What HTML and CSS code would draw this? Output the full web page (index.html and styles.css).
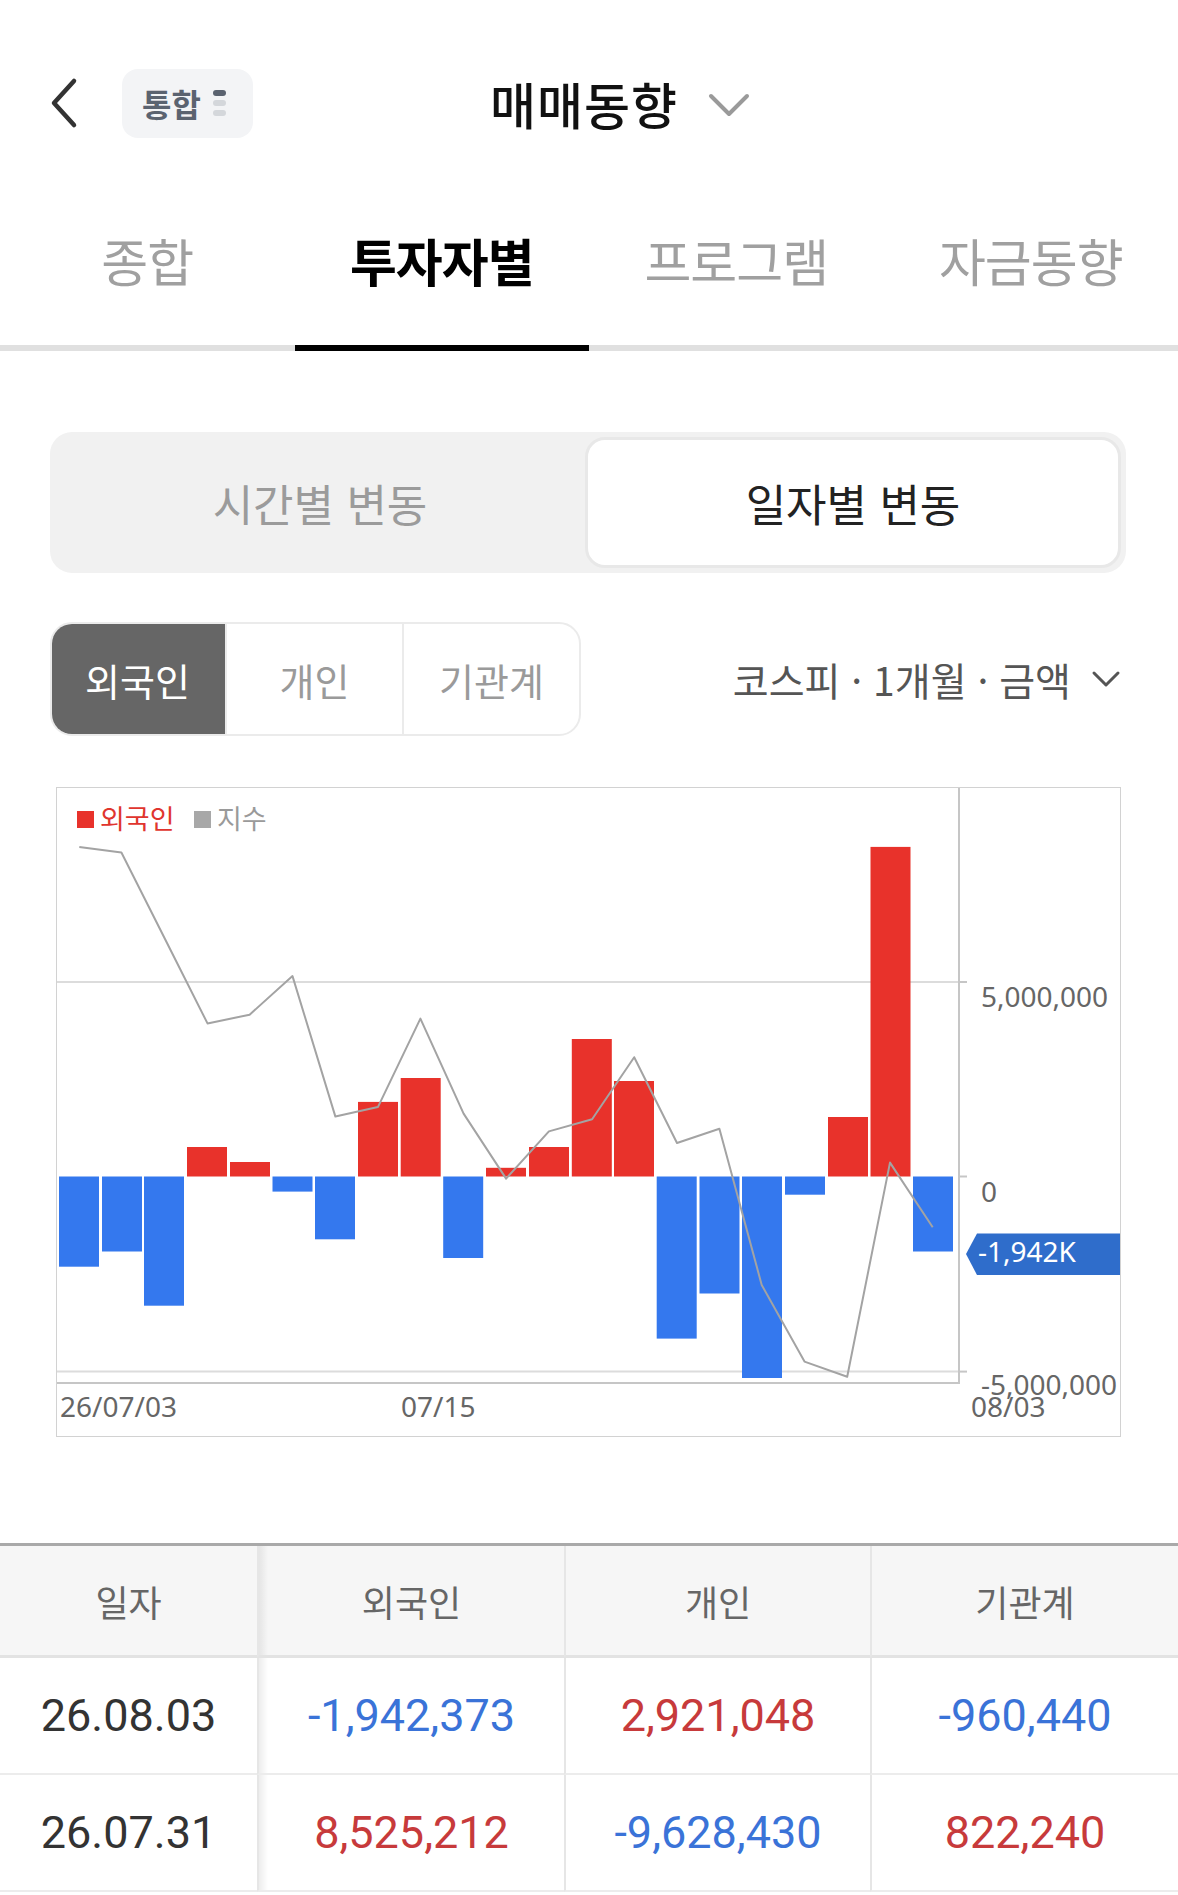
FILE: index.html
```html
<!DOCTYPE html>
<html lang="ko">
<head>
<meta charset="utf-8">
<title>매매동향</title>
<link rel="stylesheet" href="styles.css">
</head>
<body>
<header class="topbar">
  <div class="topbar-left">
    <svg class="back" viewBox="0 0 30 52" width="30" height="52"><polyline points="25,4 5,26 25,48" fill="none" stroke="#333" stroke-width="4.5" stroke-linecap="round" stroke-linejoin="round"/></svg>
    <div class="badge"><span class="badge-text">통합</span><span class="dots"><span></span><span></span><span></span></span></div>
  </div>
  <h1 class="title">매매동향</h1>
  <div class="topbar-right">
    <svg class="title-chev" viewBox="0 0 42 24" width="42" height="24"><polyline points="3,3 21,21 39,3" fill="none" stroke="#9a9a9a" stroke-width="4" stroke-linecap="round" stroke-linejoin="round"/></svg>
  </div>
</header>

<nav class="tabs">
  <div class="tab">종합</div>
  <div class="tab active">투자자별</div>
  <div class="tab">프로그램</div>
  <div class="tab">자금동향</div>
</nav>

<div class="segment">
  <div class="seg">시간별 변동</div>
  <div class="seg active">일자별 변동</div>
</div>

<div class="filters">
  <div class="group">
    <div class="fbtn active">외국인</div>
    <div class="fbtn">개인</div>
    <div class="fbtn">기관계</div>
  </div>
  <div class="dropdown">
    <span>코스피 · 1개월 · 금액</span>
    <svg class="dd-chev" viewBox="0 0 30 18" width="30" height="18"><polyline points="3,3 15,15 27,3" fill="none" stroke="#555" stroke-width="3" stroke-linecap="round" stroke-linejoin="round"/></svg>
  </div>
</div>

<svg class="chart" viewBox="56 786 1065 650" width="1065" height="650">
  <rect x="56.5" y="786.5" width="1064" height="649" fill="#fff" stroke="#d2d2d2" stroke-width="1"/>
  <g stroke="#dcdcdc" stroke-width="2">
    <line x1="57" y1="981" x2="959" y2="981"/>
    <line x1="57" y1="1370.6" x2="959" y2="1370.6"/>
  </g>
  <g fill="#3478ee">
    <rect x="59" y="1175.5" width="40" height="90.2"/>
    <rect x="102" y="1175.5" width="40" height="75"/>
    <rect x="144" y="1175.5" width="40" height="129.2"/>
    <rect x="272.5" y="1175.5" width="40" height="15.1"/>
    <rect x="315" y="1175.5" width="40" height="62.8"/>
    <rect x="443.2" y="1175.5" width="40" height="81.5"/>
    <rect x="656.7" y="1175.5" width="40" height="162.1"/>
    <rect x="699.5" y="1175.5" width="40" height="117"/>
    <rect x="742" y="1175.5" width="40" height="201.5"/>
    <rect x="785" y="1175.5" width="40" height="18.2"/>
    <rect x="913" y="1175.5" width="40" height="75"/>
  </g>
  <g fill="#e8322b">
    <rect x="187" y="1146" width="40" height="29.5"/>
    <rect x="230" y="1161" width="40" height="14.5"/>
    <rect x="358" y="1100.9" width="40" height="74.6"/>
    <rect x="400.7" y="1077" width="40" height="98.5"/>
    <rect x="486" y="1166.8" width="40" height="8.7"/>
    <rect x="529" y="1146" width="40" height="29.5"/>
    <rect x="571.8" y="1038" width="40" height="137.5"/>
    <rect x="614" y="1080" width="40" height="95.5"/>
    <rect x="828" y="1116" width="40" height="59.5"/>
    <rect x="870.5" y="845.9" width="40" height="329.6"/>
  </g>
  <g stroke="#c6c6c6" stroke-width="2">
    <line x1="959" y1="981" x2="967" y2="981"/>
    <line x1="959" y1="1175.5" x2="967" y2="1175.5"/>
    <line x1="959" y1="1370.6" x2="967" y2="1370.6"/>
    <line x1="959" y1="787" x2="959" y2="1383"/>
    <line x1="57" y1="1382" x2="959" y2="1382"/>
  </g>
  <polyline fill="none" stroke="#a3a3a3" stroke-width="2" stroke-linejoin="round" points="79.3,845.9 121.4,851.5 164.5,937 207.5,1022.4 249.6,1013.7 292.5,975.1 335.4,1115.6 377.9,1106.1 420.4,1017.6 463.6,1112.6 506.1,1177.6 548.9,1130.4 592.1,1118.2 634.2,1056.2 677,1142 719.4,1127.8 761.7,1283.9 804.5,1360.6 847.2,1375.8 890,1161.6 932.7,1226.2"/>
  <rect x="77" y="810" width="17" height="17" fill="#e8322b"/>
  <text class="lg" x="100" y="828" fill="#e0352e">외국인</text>
  <rect x="194" y="810" width="17" height="17" fill="#a8a8a8"/>
  <text class="lg" x="217" y="828" fill="#9a9a9a">지수</text>
  <g class="ax" fill="#666">
    <text x="981" y="1006">5,000,000</text>
    <text x="981" y="1200.5">0</text>
    <text x="981" y="1394">-5,000,000</text>
    <text x="971" y="1416">08/03</text>
    <text x="60" y="1416">26/07/03</text>
    <text x="401" y="1416">07/15</text>
  </g>
  <polygon points="966,1253 977,1232.5 1120,1232.5 1120,1274 977,1274" fill="#2f6dcb"/>
  <text class="ax" x="978" y="1261" fill="#fff">-1,942K</text>
</svg>

<div class="table">
  <div class="th">일자</div>
  <div class="th c2">외국인</div>
  <div class="th">개인</div>
  <div class="th">기관계</div>

  <div class="td date">26.08.03</div>
  <div class="td c2 blue">-1,942,373</div>
  <div class="td red">2,921,048</div>
  <div class="td blue">-960,440</div>

  <div class="td date">26.07.31</div>
  <div class="td c2 red">8,525,212</div>
  <div class="td blue">-9,628,430</div>
  <div class="td red">822,240</div>
</div>
</body>
</html>
```
FILE: styles.css
```css
* { box-sizing: border-box; margin: 0; padding: 0; }

body {
  width: 1178px;
  background: #fff;
  font-family: "Noto Sans CJK KR", "Noto Sans", sans-serif;
  color: #111;
}

.topbar {
  height: 206px;
  display: grid;
  grid-template-columns: 1fr auto 1fr;
  align-items: center;
}

.topbar-left {
  display: flex;
  align-items: center;
  padding-left: 49px;
}

.back { display: block; }

.badge {
  margin-left: 43px;
  width: 131px;
  height: 69px;
  border-radius: 16px;
  background: #f3f4f6;
  display: flex;
  align-items: center;
  padding-left: 20px;
  gap: 12px;
}

.badge-text {
  font-size: 32px;
  font-weight: 700;
  color: #5b6370;
  line-height: 1;
}

.dots {
  display: flex;
  flex-direction: column;
  gap: 4px;
}

.dots span {
  width: 13px;
  height: 6px;
  border-radius: 3px;
  background: #d4d7db;
}

.dots span:first-child { background: #5b6370; }

.title {
  font-size: 50px;
  font-weight: 500;
  letter-spacing: 1px;
  color: #111;
  line-height: 1;
  margin-right: 10px;
}

.topbar-right {
  display: flex;
  align-items: center;
  padding-left: 20px;
}

.title-chev { display: block; margin-top: 4px; }

.tabs {
  display: flex;
  height: 145px;
  border-bottom: 6px solid #e0e0e0;
}

.tab {
  flex: 1;
  position: relative;
  text-align: center;
  padding-top: 22px;
  font-size: 51px;
  line-height: 64px;
  letter-spacing: -1px;
  color: #a0a0a0;
}

.tab.active {
  color: #000;
  font-weight: 700;
}

.tab.active::after {
  content: "";
  position: absolute;
  left: 0;
  right: 0;
  bottom: -6px;
  height: 6px;
  background: #000;
}

.segment {
  margin: 81px 52px 0 50px;
  height: 141px;
  background: #f1f1f1;
  border-radius: 22px;
  display: flex;
  padding: 5px;
}

.seg {
  flex: 1;
  display: flex;
  align-items: center;
  justify-content: center;
  font-size: 44px;
  color: #9b9b9b;
  border-radius: 20px;
}

.seg.active {
  background: #fff;
  border: 3px solid #e8e8e8;
  color: #222;
}

.filters {
  display: flex;
  align-items: center;
  justify-content: space-between;
  margin: 49px 57px 0 50px;
  height: 114px;
}

.group {
  display: flex;
  width: 531px;
  height: 114px;
  border: 2px solid #ebebeb;
  border-radius: 22px;
  overflow: hidden;
}

.fbtn {
  flex: 1;
  display: flex;
  align-items: center;
  justify-content: center;
  font-size: 38px;
  color: #9a9a9a;
}

.fbtn + .fbtn { border-left: 2px solid #ebebeb; }

.fbtn.active {
  background: #666;
  color: #fff;
  margin: -2px 0 -2px -2px;
}

.dropdown {
  display: flex;
  align-items: center;
  gap: 20px;
  font-size: 39px;
  color: #555;
}

.dd-chev { display: block; }

.chart {
  display: block;
  margin: 51px 0 0 56px;
}

.chart .lg {
  font-family: "Noto Sans CJK KR", sans-serif;
  font-size: 27px;
}

.chart .ax {
  font-family: "Noto Sans", sans-serif;
  font-size: 28px;
}

.table {
  margin-top: 106px;
  border-top: 3px solid #a9a9a9;
  display: grid;
  grid-template-columns: 257px 307px 306px 308px;
}

.th {
  height: 112px;
  background: #f6f6f6;
  border-bottom: 3px solid #e3e3e3;
  display: flex;
  align-items: center;
  justify-content: center;
  font-size: 36px;
  color: #666;
}

.td {
  height: 117px;
  border-bottom: 2px solid #ececec;
  display: flex;
  align-items: center;
  justify-content: center;
  font-family: Roboto, "Noto Sans", sans-serif;
  font-size: 45px;
}

.th + .th,
.td:not(.date) { border-left: 2px solid #e6e6e6; }

.c2 {
  background-image: linear-gradient(to right, rgba(0, 0, 0, 0.07), rgba(0, 0, 0, 0) 9px);
}

.date { color: #333; }
.blue { color: #3a73d8; }
.red { color: #c73a3b; }
```
